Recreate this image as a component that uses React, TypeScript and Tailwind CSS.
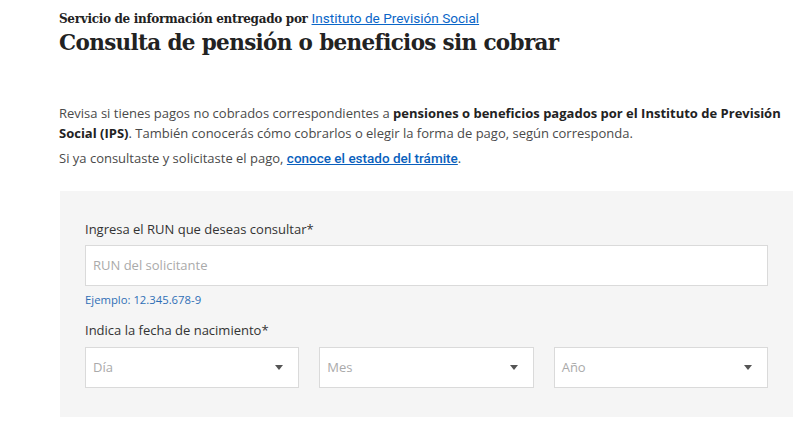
const serif = 'font-["Roboto_Slab","DejaVu_Serif",serif]'
const body = 'font-["Open_Sans",sans-serif]'

function Caret() {
  return (
    <svg width="8" height="5" viewBox="0 0 8 5" className="shrink-0">
      <path d="M0 0h8L4 5z" fill="#555" />
    </svg>
  )
}

function Select({ label }: { label: string }) {
  return (
    <div className="flex h-[41px] items-center justify-between border border-[#dadada] bg-white pl-[7px] pr-[15px]">
      <span className="text-[13px] text-[#aaa]">{label}</span>
      <Caret />
    </div>
  )
}

export default function App() {
  return (
    <div className={`${body} min-h-screen bg-white pl-[59px] pr-[7px] text-[#4a4a4a]`}>
      <div className="pt-[8px]">
        <p className={`${serif} text-[12px] leading-[20px] font-bold tracking-[-0.3px] text-[#222]`}>
          Servicio de información entregado por{' '}
          <a className='font-["Roboto",sans-serif] text-[13.6px] font-normal tracking-normal text-[#0a66c8] underline'>
            Instituto de Previsión Social
          </a>
        </p>
        <h1 className={`${serif} text-[21.5px] leading-[28px] font-bold tracking-[-0.65px] text-[#222]`}>
          Consulta de pensión o beneficios sin cobrar
        </h1>
      </div>

      <div className="mt-[46px] text-[13px] leading-[20px]">
        <p>
          Revisa si tienes pagos no cobrados correspondientes a{' '}
          <strong className="font-bold text-[#222]">
            pensiones o beneficios pagados por el Instituto de Previsión Social (IPS)
          </strong>
          . También conocerás cómo cobrarlos o elegir la forma de pago, según corresponda.
        </p>
        <p className="mt-[5px]">
          Si ya consultaste y solicitaste el pago,{' '}
          <a className='font-["Roboto",sans-serif] text-[13.5px] font-medium text-[#0a5fbd] underline'>
            conoce el estado del trámite
          </a>
          .
        </p>
      </div>

      <div className="mt-[23px] ml-px bg-[#f5f5f5] px-[25px] pt-[28px] pb-[29px]">
        <label className="block text-[13px] leading-[20px] text-[#333]">
          Ingresa el RUN que deseas consultar*
        </label>
        <div className="mt-[6px] flex h-[41px] items-center border border-[#dadada] bg-white px-[7px]">
          <span className="text-[13px] text-[#aaa]">RUN del solicitante</span>
        </div>
        <p className="mt-[6px] text-[11.3px] leading-[16px] text-[#2f6fb5]">Ejemplo: 12.345.678-9</p>
        <label className="mt-[12px] block text-[13px] leading-[20px] text-[#333]">
          Indica la fecha de nacimiento*
        </label>
        <div className="mt-[7px] grid grid-cols-3 gap-5">
          <Select label="Día" />
          <Select label="Mes" />
          <Select label="Año" />
        </div>
      </div>
    </div>
  )
}
